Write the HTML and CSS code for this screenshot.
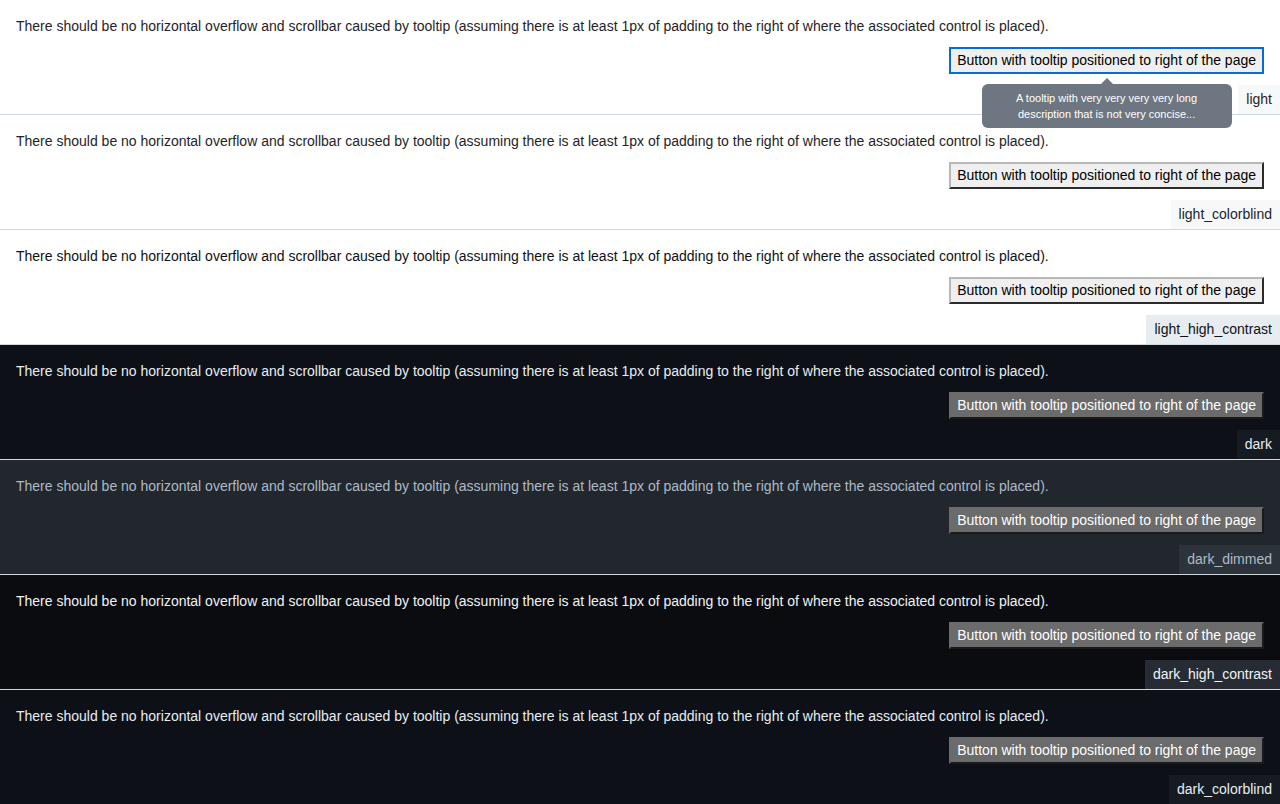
FILE: index.html
```html
<!DOCTYPE html>
<html lang="en">
<head>
<meta charset="utf-8">
<title>Tooltip overflow</title>
<link rel="stylesheet" href="styles.css">
</head>
<body>
  <section class="theme light">
    <p class="desc">There should be no horizontal overflow and scrollbar caused by tooltip (assuming there is at least 1px of padding to the right of where the associated control is placed).</p>
    <div class="btn-wrap">
      <button class="btn focused">Button with tooltip positioned to right of the page</button>
      <div class="tooltip">A tooltip with very very very very long description that is not very concise...</div>
    </div>
    <span class="label">light</span>
  </section>
  <section class="theme light">
    <p class="desc">There should be no horizontal overflow and scrollbar caused by tooltip (assuming there is at least 1px of padding to the right of where the associated control is placed).</p>
    <div class="btn-wrap"><button class="btn">Button with tooltip positioned to right of the page</button></div>
    <span class="label">light_colorblind</span>
  </section>
  <section class="theme light-hc">
    <p class="desc">There should be no horizontal overflow and scrollbar caused by tooltip (assuming there is at least 1px of padding to the right of where the associated control is placed).</p>
    <div class="btn-wrap"><button class="btn">Button with tooltip positioned to right of the page</button></div>
    <span class="label">light_high_contrast</span>
  </section>
  <section class="theme dark">
    <p class="desc">There should be no horizontal overflow and scrollbar caused by tooltip (assuming there is at least 1px of padding to the right of where the associated control is placed).</p>
    <div class="btn-wrap"><button class="btn">Button with tooltip positioned to right of the page</button></div>
    <span class="label">dark</span>
  </section>
  <section class="theme dark-dimmed">
    <p class="desc">There should be no horizontal overflow and scrollbar caused by tooltip (assuming there is at least 1px of padding to the right of where the associated control is placed).</p>
    <div class="btn-wrap"><button class="btn">Button with tooltip positioned to right of the page</button></div>
    <span class="label">dark_dimmed</span>
  </section>
  <section class="theme dark-hc">
    <p class="desc">There should be no horizontal overflow and scrollbar caused by tooltip (assuming there is at least 1px of padding to the right of where the associated control is placed).</p>
    <div class="btn-wrap"><button class="btn">Button with tooltip positioned to right of the page</button></div>
    <span class="label">dark_high_contrast</span>
  </section>
  <section class="theme dark">
    <p class="desc">There should be no horizontal overflow and scrollbar caused by tooltip (assuming there is at least 1px of padding to the right of where the associated control is placed).</p>
    <div class="btn-wrap"><button class="btn">Button with tooltip positioned to right of the page</button></div>
    <span class="label">dark_colorblind</span>
  </section>
</body>
</html>
```

FILE: styles.css
```css
html, body {
  margin: 0;
  padding: 0;
}
body {
  font-family: "Liberation Sans", Arial, sans-serif;
  font-size: 14px;
  line-height: 21px;
  background: #0d1117;
  overflow: hidden;
}
.theme {
  display: flex;
  flex-direction: column;
  padding: 16px 0 0 16px;
  border-bottom: 1px solid #d0d7de;
  height: 98px;
}
.desc {
  margin: 0;
}
.btn-wrap {
  position: relative;
  align-self: flex-end;
  margin: 10px 16px 0 0;
}
.btn {
  display: block;
  font-family: "Liberation Sans", Arial, sans-serif;
  font-size: 14px;
  line-height: 21px;
  padding: 1px 6px;
  margin: 0;
  border-width: 2px;
  border-style: solid;
  border-radius: 0;
}
.label {
  align-self: flex-end;
  margin-top: 11px;
  padding: 4px 8px;
}
.tooltip {
  position: absolute;
  z-index: 10;
  top: 37px;
  left: 50%;
  transform: translateX(-50%);
  width: 250px;
  box-sizing: border-box;
  padding: 5.5px 8px;
  font-size: 11px;
  line-height: 16.5px;
  text-align: center;
  color: #ffffff;
  background: #6e7781;
  border-radius: 6px;
}
.tooltip::before {
  content: "";
  position: absolute;
  top: -12px;
  left: 50%;
  margin-left: -6px;
  border: 6px solid transparent;
  border-bottom-color: #6e7781;
}

/* themes */
.light {
  background: #ffffff;
  color: #1f2328;
}
.light .label { background: #f6f8fa; color: #1f2328; }
.light-hc {
  background: #ffffff;
  color: #0e1116;
}
.light-hc .label { background: #e7ecf0; color: #0e1116; }
.light .btn, .light-hc .btn {
  background: #efefef;
  color: #000000;
  border-color: #b8b8b8 #2b2b2b #2b2b2b #b8b8b8;
}
.btn.focused {
  outline: 2px solid #0969da;
  outline-offset: -2px;
}
.dark {
  background: #0d1117;
  color: #e6edf3;
}
.dark .label { background: #161b22; color: #e6edf3; }
.dark-dimmed {
  background: #22272e;
  color: #adbac7;
}
.dark-dimmed .label { background: #2d333b; color: #adbac7; }
.dark-hc {
  background: #0a0c10;
  color: #f0f3f6;
}
.dark-hc .label { background: #272b33; color: #f0f3f6; }
.dark .btn, .dark-dimmed .btn, .dark-hc .btn {
  background: #6b6b6b;
  color: #ffffff;
  border-color: #6b6b6b #1a1a1a #1a1a1a #6b6b6b;
}
```
